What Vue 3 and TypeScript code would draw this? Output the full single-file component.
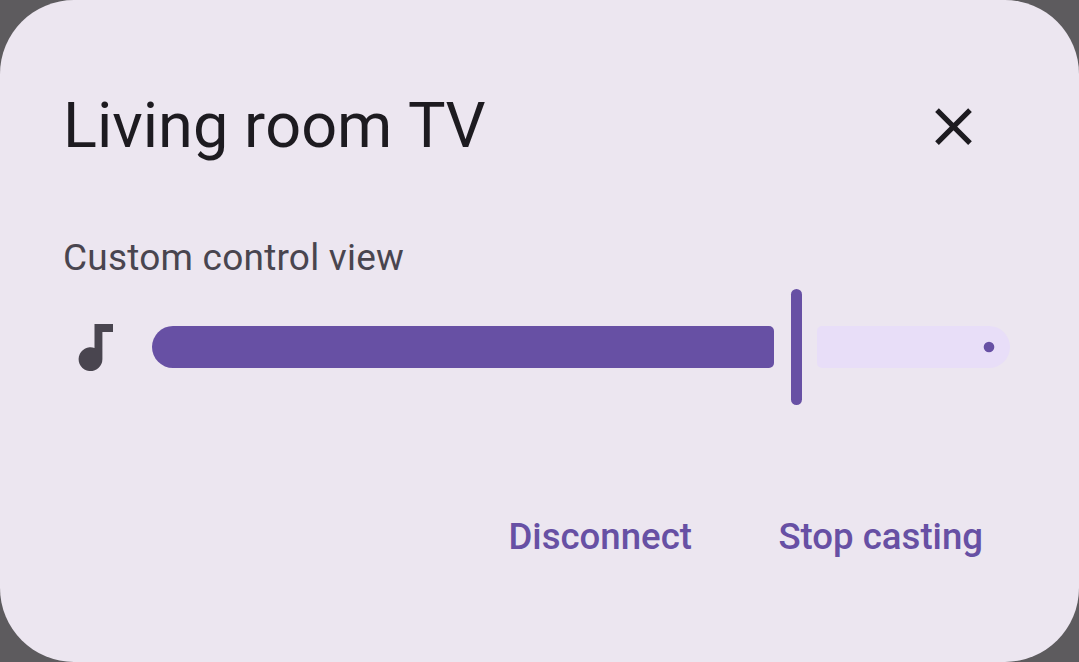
<script setup lang="ts">
import { ref } from 'vue'

const deviceName = ref('Living room TV')
const actions = ['Disconnect', 'Stop casting']
</script>

<template>
  <main class="backdrop">
    <section class="dialog">
      <header class="header">
        <h1>{{ deviceName }}</h1>
        <button class="close" aria-label="Close">
          <svg width="40" height="38" viewBox="0 0 40 38"><path d="M3 2.200 36 35.200M36 2.200 3 35.200" /></svg>
        </button>
      </header>
      <p class="label">Custom control view</p>
      <div class="volume">
        <svg class="note" width="64" height="64" viewBox="0 0 64 64"><path d="M30.500 9H49V17H38.400V44.200A11.900 11.900 0 1 1 30.500 33z" /></svg>
        <div class="slider">
          <div class="active"></div>
          <div class="thumb"></div>
          <div class="inactive">
            <svg class="stop" width="12" height="12" viewBox="0 0 12 12"><circle cx="6" cy="6" r="5.300" /></svg>
          </div>
        </div>
      </div>
      <footer class="actions">
        <button v-for="action in actions" :key="action">{{ action }}</button>
      </footer>
    </section>
  </main>
</template>

<style scoped>
.backdrop {
  width: 1079px;
  height: 662px;
  background: #5d5b5e;
  font-family: Roboto, sans-serif;
  overflow: hidden;
}
.dialog {
  box-sizing: border-box;
  width: 1079px;
  height: 662px;
  padding: 88px 64px 0 63px;
  border-radius: 74px;
  background: #ece6f0;
}
.header {
  display: flex;
  justify-content: space-between;
  height: 76px;
}
h1 {
  margin: 0;
  font-size: 63px;
  font-weight: 400;
  line-height: 75px;
  font-kerning: none;
  color: #1d1b20;
  white-space: nowrap;
}
button {
  padding: 0;
  border: 0;
  background: none;
  font-family: inherit;
}
.close {
  width: 40px;
  height: 38px;
  margin: 20px 41px 0 0;
}
.close svg { display: block; }
.close path { fill: none; stroke: #1d1b20; stroke-width: 5.2; }
.label {
  height: 44px;
  margin: 72px 0 0;
  font-size: 37px;
  line-height: 44px;
  letter-spacing: 0.22px;
  color: #49454f;
  white-space: nowrap;
}
.volume {
  display: flex;
  align-items: center;
  height: 116px;
  margin: 9px 0 0 1px;
}
.note { fill: #49454f; flex: none; }
.slider {
  display: flex;
  align-items: center;
  width: 858px;
  flex: none;
  margin-left: 24px;
}
.active {
  width: 622px;
  height: 42px;
  border-radius: 21px 5px 5px 21px;
  background: #6750a4;
}
.thumb {
  width: 11px;
  height: 116px;
  margin: 0 15px 0 17px;
  border-radius: 6px;
  background: #6750a4;
}
.inactive {
  display: flex;
  align-items: center;
  justify-content: flex-end;
  box-sizing: border-box;
  width: 193px;
  height: 42px;
  padding-right: 15px;
  border-radius: 5px 21px 21px 5px;
  background: #e8def8;
}
.stop { fill: #6750a4; }
.actions {
  display: flex;
  justify-content: flex-end;
  gap: 86.5px;
  margin: 109px 32px 0 0;
}
.actions button {
  font-size: 36.6px;
  font-weight: 500;
  line-height: 46px;
  color: #6750a4;
  white-space: nowrap;
}
</style>
